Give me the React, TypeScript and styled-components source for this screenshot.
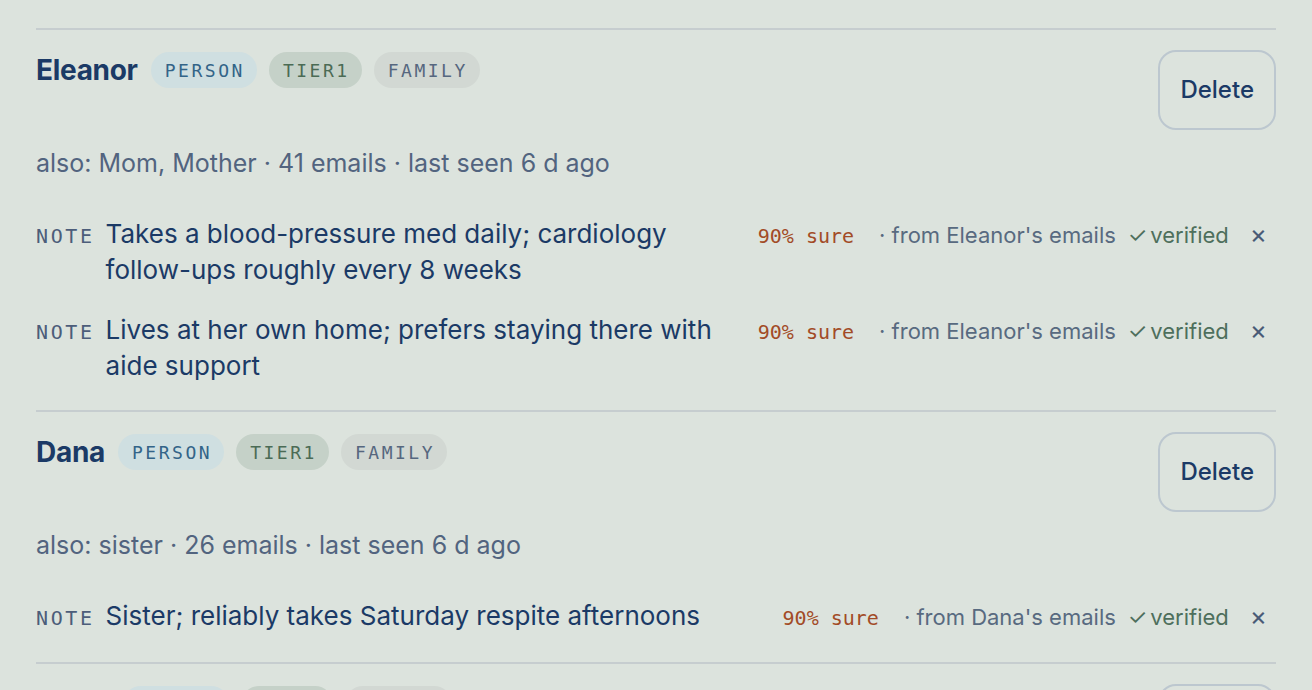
import React from "react";
import styled, { createGlobalStyle, css } from "styled-components";

const GlobalStyle = createGlobalStyle`
  html, body {
    margin: 0;
    padding: 0;
    background: #dce3dd;
  }
  body {
    font-family: Inter, "Noto Sans", "Liberation Sans", sans-serif;
    -webkit-font-smoothing: antialiased;
  }
  * { box-sizing: border-box; }
`;

const MONO = `"DejaVu Sans Mono", "Liberation Mono", monospace`;

const Page = styled.main`
  padding: 28px 36px 0;
  min-height: 690px;
  background: #dce3dd;
`;

const List = styled.div`
  display: flex;
  flex-direction: column;
`;

const EntityRow = styled.section`
  border-top: 2px solid #c6cdcf;
  padding: 20px 0 26px;
`;

const Header = styled.div`
  display: flex;
  justify-content: space-between;
  align-items: flex-start;
`;

const NameLine = styled.div`
  display: flex;
  align-items: center;
  gap: 12px;
  height: 40px;
`;

const Name = styled.h3`
  margin: 0 1px 0 0;
  font-size: 28px;
  font-weight: 700;
  color: #1b3a66;
  letter-spacing: -0.3px;
`;

type PillKind = "type" | "tier" | "group";

const pillColors: Record<PillKind, ReturnType<typeof css>> = {
  type: css`
    background: #cfdfe1;
    color: #336488;
  `,
  tier: css`
    background: #c5d1c8;
    color: #4b6b55;
  `,
  group: css`
    background: #d2d8d3;
    color: #56677f;
  `,
};

const Pill = styled.span<{ $kind: PillKind }>`
  display: inline-flex;
  align-items: center;
  height: 36px;
  padding: 0 12px 0 14px;
  border-radius: 18px;
  font-family: ${MONO};
  font-size: 18px;
  letter-spacing: 0.14em;
  ${(p) => pillColors[p.$kind]}
`;

const DeleteButton = styled.button`
  height: 80px;
  padding: 0 20px 2px;
  border: 2px solid #bcc7cf;
  border-radius: 18px;
  background: transparent;
  font-family: Inter, "Noto Sans", sans-serif;
  font-size: 24px;
  font-weight: 500;
  color: #1b3a66;
  cursor: pointer;
`;

const Meta = styled.div`
  margin-top: 17px;
  font-size: 25px;
  line-height: 33px;
  color: #52647f;
`;

const Notes = styled.ul`
  list-style: none;
  margin: 36px 0 0;
  padding: 0;
  display: flex;
  flex-direction: column;
  gap: 24px;
`;

const NoteRow = styled.li`
  display: flex;
  align-items: baseline;
  gap: 10px;
  min-height: 38px;
`;

const NoteLabel = styled.span`
  font-family: ${MONO};
  font-size: 20px;
  letter-spacing: 0.13em;
  color: #4c5d7a;
`;

const NoteText = styled.p`
  flex: 1;
  margin: 0 0 0 1px;
  font-size: 26px;
  line-height: 36px;
  color: #1b3a66;
`;

const NoteMeta = styled.div`
  display: flex;
  align-items: baseline;
  gap: 12px;
  margin-left: 10px;
  white-space: nowrap;
`;

const Confidence = styled.span`
  font-family: ${MONO};
  font-size: 20px;
  color: #a24b26;
  margin-right: 13px;
`;

const Source = styled.span`
  font-size: 22px;
  color: #586a80;
`;

const Verified = styled.span`
  font-size: 22px;
  color: #4e6f5c;
`;

const Check = styled.span`
  margin-right: 3px;
`;

const Dismiss = styled.button`
  padding: 0 9px;
  border: none;
  background: transparent;
  font-family: Inter, "Noto Sans", sans-serif;
  font-size: 26px;
  line-height: 1;
  color: #4a5b77;
  cursor: pointer;
`;

type Note = { text: string; confidence: number; source: string };
type Entity = {
  name: string;
  aliases: string;
  emails: number;
  lastSeen: string;
  notes: Note[];
};

const entities: Entity[] = [
  {
    name: "Eleanor",
    aliases: "Mom, Mother",
    emails: 41,
    lastSeen: "6 d ago",
    notes: [
      {
        text: "Takes a blood-pressure med daily; cardiology follow-ups roughly every 8 weeks",
        confidence: 90,
        source: "Eleanor's emails",
      },
      {
        text: "Lives at her own home; prefers staying there with aide support",
        confidence: 90,
        source: "Eleanor's emails",
      },
    ],
  },
  {
    name: "Dana",
    aliases: "sister",
    emails: 26,
    lastSeen: "6 d ago",
    notes: [
      {
        text: "Sister; reliably takes Saturday respite afternoons",
        confidence: 90,
        source: "Dana's emails",
      },
    ],
  },
  {
    name: "Maya",
    aliases: "aide",
    emails: 18,
    lastSeen: "2 d ago",
    notes: [
      {
        text: "Weekday home aide; covers mornings Monday through Friday",
        confidence: 85,
        source: "Maya's emails",
      },
    ],
  },
];

export default function App() {
  return (
    <>
      <GlobalStyle />
      <Page>
        <List>
          {entities.map((e) => (
            <EntityRow key={e.name}>
              <Header>
                <NameLine>
                  <Name>{e.name}</Name>
                  <Pill $kind="type">PERSON</Pill>
                  <Pill $kind="tier">TIER1</Pill>
                  <Pill $kind="group">FAMILY</Pill>
                </NameLine>
                <DeleteButton>Delete</DeleteButton>
              </Header>
              <Meta>
                also: {e.aliases} · {e.emails} emails · last seen {e.lastSeen}
              </Meta>
              <Notes>
                {e.notes.map((n, i) => (
                  <NoteRow key={i}>
                    <NoteLabel>NOTE</NoteLabel>
                    <NoteText>{n.text}</NoteText>
                    <NoteMeta>
                      <Confidence>{n.confidence}% sure</Confidence>
                      <Source>· from {n.source}</Source>
                      <Verified>
                        <Check>✓</Check>verified
                      </Verified>
                      <Dismiss aria-label="Dismiss note">×</Dismiss>
                    </NoteMeta>
                  </NoteRow>
                ))}
              </Notes>
            </EntityRow>
          ))}
        </List>
      </Page>
    </>
  );
}
